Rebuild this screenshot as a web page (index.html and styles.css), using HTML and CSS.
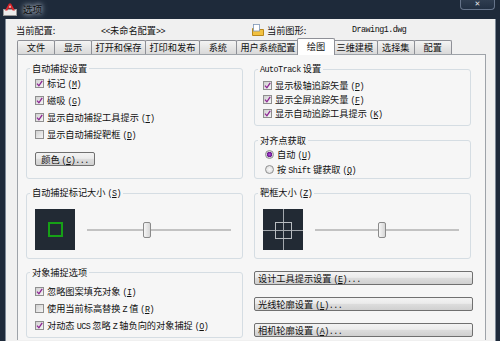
FILE: index.html
```html
<!DOCTYPE html>
<html lang="zh-CN">
<head>
    <meta charset="UTF-8">
    <meta name="viewport" content="width=device-width, initial-scale=1.0">
    <title>选项</title>
    <link rel="stylesheet" href="styles.css">
</head>
<body>
    <div class="titlebar">
        <svg class="app-icon" viewBox="0 0 14 13">
            <rect x="0.5" y="6.5" width="13" height="6" fill="#ececec" stroke="#9a9a9a"/>
            <path d="M2 7.5 L6 0.5 H8 L12 7.5 H9.6 L8.7 5.6 H5.3 L4.4 7.5Z" fill="#d8262c"/>
            <path d="M5.9 4.4 H8.1 L7 2.3Z" fill="#ececec"/>
        </svg>
        <span class="title">选项</span>
        <span class="close">✕</span>
    </div>

    <div class="client">
        <div class="profile">
            <div class="profile-half first">
                <span class="profile-label">当前配置:</span>
                <span><span class="en">&lt;&lt;</span>未命名配置<span class="en">&gt;&gt;</span></span>
            </div>
            <div class="profile-half">
                <svg class="dwg-icon" viewBox="0 0 12 12">
                    <path d="M0.5 4.5 H4.5 L5.5 5.5 H11.5 V11.5 H0.5Z" fill="#f2c140" stroke="#b8881c"/>
                    <rect x="1.5" y="0.5" width="6" height="6.5" fill="#fff" stroke="#7d96b6" stroke-width="0.8"/>
                </svg>
                <span class="profile-label">当前图形:</span>
                <span class="en">Drawing1.dwg</span>
            </div>
        </div>

        <div class="tabs">
            <div class="tab">文件</div>
            <div class="tab">显示</div>
            <div class="tab">打开和保存</div>
            <div class="tab">打印和发布</div>
            <div class="tab">系统</div>
            <div class="tab">用户系统配置</div>
            <div class="tab active">绘图</div>
            <div class="tab">三维建模</div>
            <div class="tab">选择集</div>
            <div class="tab">配置</div>
        </div>

        <div class="panel">
            <div class="grid">
                <fieldset class="group">
                    <legend>自动捕捉设置</legend>
                    <div class="opts">
                        <label class="opt"><span class="cb"><svg viewBox="0 0 7 7"><path d="M1 3.6 L2.9 5.8 L6.2 0.8"/></svg></span><span>标记<span class="key">(<u>M</u>)</span></span></label>
                        <label class="opt"><span class="cb"><svg viewBox="0 0 7 7"><path d="M1 3.6 L2.9 5.8 L6.2 0.8"/></svg></span><span>磁吸<span class="key">(<u>G</u>)</span></span></label>
                        <label class="opt"><span class="cb"><svg viewBox="0 0 7 7"><path d="M1 3.6 L2.9 5.8 L6.2 0.8"/></svg></span><span>显示自动捕捉工具提示<span class="key">(<u>T</u>)</span></span></label>
                        <label class="opt"><span class="cb"></span><span>显示自动捕捉靶框<span class="key">(<u>D</u>)</span></span></label>
                    </div>
                    <button class="btn btn-color" type="button">颜色<span class="key">(<u>C</u>)...</span></button>
                </fieldset>

                <div class="stack">
                    <fieldset class="group">
                        <legend><span class="en">AutoTrack</span> 设置</legend>
                        <div class="opts tight">
                            <label class="opt"><span class="cb"><svg viewBox="0 0 7 7"><path d="M1 3.6 L2.9 5.8 L6.2 0.8"/></svg></span><span>显示极轴追踪矢量<span class="key">(<u>P</u>)</span></span></label>
                            <label class="opt"><span class="cb"><svg viewBox="0 0 7 7"><path d="M1 3.6 L2.9 5.8 L6.2 0.8"/></svg></span><span>显示全屏追踪矢量<span class="key">(<u>F</u>)</span></span></label>
                            <label class="opt"><span class="cb"><svg viewBox="0 0 7 7"><path d="M1 3.6 L2.9 5.8 L6.2 0.8"/></svg></span><span>显示自动追踪工具提示<span class="key">(<u>K</u>)</span></span></label>
                        </div>
                    </fieldset>
                    <fieldset class="group grow">
                        <legend>对齐点获取</legend>
                        <div class="opts radios">
                            <label class="opt"><span class="rb on"></span><span>自动<span class="key">(<u>U</u>)</span></span></label>
                            <label class="opt"><span class="rb"></span><span>按 <span class="en">Shift</span> 键获取<span class="key">(<u>Q</u>)</span></span></label>
                        </div>
                    </fieldset>
                </div>

                <fieldset class="group">
                    <legend>自动捕捉标记大小<span class="key">(<u>S</u>)</span></legend>
                    <div class="size-row">
                        <div class="preview"><span class="marker"></span></div>
                        <div class="slider"><span class="thumb" style="left: 39%"></span></div>
                    </div>
                </fieldset>

                <fieldset class="group">
                    <legend>靶框大小<span class="key">(<u>Z</u>)</span></legend>
                    <div class="size-row">
                        <div class="preview">
                            <svg viewBox="0 0 40 41" width="40" height="41">
                                <path d="M0 21.5 H40 M20.5 0 V41" stroke="#a3a8ad" stroke-width="1"/>
                                <rect x="12.5" y="13.5" width="16" height="16" fill="none" stroke="#b9bdc1"/>
                            </svg>
                        </div>
                        <div class="slider"><span class="thumb" style="left: 44%"></span></div>
                    </div>
                </fieldset>

                <fieldset class="group">
                    <legend>对象捕捉选项</legend>
                    <div class="opts lower">
                        <label class="opt"><span class="cb"><svg viewBox="0 0 7 7"><path d="M1 3.6 L2.9 5.8 L6.2 0.8"/></svg></span><span>忽略图案填充对象<span class="key">(<u>I</u>)</span></span></label>
                        <label class="opt"><span class="cb"></span><span>使用当前标高替换 <span class="en">Z</span> 值<span class="key">(<u>R</u>)</span></span></label>
                        <label class="opt"><span class="cb"><svg viewBox="0 0 7 7"><path d="M1 3.6 L2.9 5.8 L6.2 0.8"/></svg></span><span>对动态 <span class="en">UCS</span> 忽略 <span class="en">Z</span> 轴负向的对象捕捉<span class="key">(<u>O</u>)</span></span></label>
                    </div>
                </fieldset>

                <div class="btn-stack">
                    <button class="btn btn-wide" type="button">设计工具提示设置<span class="key">(<u>E</u>)...</span></button>
                    <button class="btn btn-wide" type="button">光线轮廓设置<span class="key">(<u>L</u>)...</span></button>
                    <button class="btn btn-wide" type="button">相机轮廓设置<span class="key">(<u>A</u>)...</span></button>
                </div>
            </div>
        </div>
    </div>
</body>
</html>
```

FILE: styles.css
```css
body {
    margin: 0;
    height: 341px;
    overflow: hidden;
    background: #1e2a3a;
    font-family: "Noto Sans CJK SC", "Noto Sans", sans-serif;
    font-size: 9.2px;
    color: #111;
}

.en {
    font-family: "Liberation Mono", monospace;
    font-size: 8.4px;
    letter-spacing: -0.5px;
}

.key {
    font-family: "Liberation Mono", monospace;
    font-size: 8.4px;
    letter-spacing: -0.5px;
    margin-left: 2px;
}

/* title bar */
.titlebar {
    height: 19px;
    display: flex;
    align-items: flex-start;
    padding-left: 3px;
}

.app-icon {
    width: 14px;
    height: 13px;
    margin-top: 3px;
}

.title {
    margin: 3px 0 0 6px;
    line-height: 13px;
    font-size: 9.6px;
    color: #0c0c0c;
    text-shadow: 0 0 4px #c9d5e2, 0 0 7px #c9d5e2;
}

.close {
    margin-left: auto;
    margin-right: 5px;
    width: 35px;
    height: 10px;
    box-sizing: border-box;
    border: 1px solid #66748a;
    border-top: none;
    border-radius: 0 0 4px 4px;
    background: linear-gradient(#2f3d50, #223043);
    color: #e6e6e6;
    font: bold 7px "DejaVu Sans", sans-serif;
    line-height: 8px;
    text-align: center;
}

/* window body */
.client {
    height: 322px;
    overflow: hidden;
    margin: 0 4px 0 5px;
    border-left: 1px solid #7f8b98;
    border-right: 1px solid #7f8b98;
    background: #f0f0f0;
}

.profile {
    height: 19px;
    box-sizing: border-box;
    padding: 3px 0 0 10px;
    display: flex;
    align-items: center;
}

.profile-half {
    display: flex;
    align-items: center;
}

.profile-half.first {
    width: 236px;
}

.profile-label {
    width: 85px;
}

.dwg-icon {
    width: 12px;
    height: 12px;
    margin-right: 3px;
}

/* tabs */
.tabs {
    height: 16px;
    margin-left: 11px;
    display: flex;
    align-items: flex-end;
}

.tab {
    height: 14px;
    min-width: 38px;
    box-sizing: border-box;
    padding: 0 3.5px;
    margin-left: -1px;
    border: 1px solid #8e9097;
    border-bottom: none;
    border-radius: 2px 2px 0 0;
    background: linear-gradient(#f4f4f4, #e6e6e6 50%, #d9d9d9);
    line-height: 13px;
    text-align: center;
}

.tab:first-child {
    margin-left: 0;
}

.tab.active {
    height: 17px;
    margin: 0 -2px -1px -3px;
    background: #fff;
    line-height: 14px;
    position: relative;
    z-index: 1;
}

.panel {
    height: 278px;
    margin: 0 9px 0 11px;
    padding: 7px 14px 0 8px;
    border: 1px solid #9ea3a9;
    border-bottom: none;
    background: #f6f6f6;
}

.grid {
    display: grid;
    grid-template-columns: 217px 217px;
    column-gap: 11px;
    row-gap: 7px;
}

/* group boxes */
.group {
    margin: 0;
    padding: 0 11px 0 8px;
    min-width: 0;
    border: 1px solid #d5dde3;
    border-radius: 3px;
}

.group legend {
    padding: 0 2px;
    margin-left: -5px;
    line-height: 12px;
}

.stack {
    display: flex;
    flex-direction: column;
    gap: 8px;
}

.stack .grow {
    flex: 1;
}

.opts {
    display: flex;
    flex-direction: column;
    gap: 3px;
    padding: 2px 0 0;
}

.opts.tight {
    gap: 0;
    padding-bottom: 5px;
}

.opts.radios {
    gap: 1px;
    padding: 1px 0 0 2px;
}

.opts.lower {
    padding: 6px 0 5px;
}

.opt {
    height: 14px;
    display: flex;
    align-items: center;
    white-space: nowrap;
}

.cb {
    width: 9px;
    height: 9px;
    box-sizing: border-box;
    margin-right: 3px;
    border: 1px solid #8f8f8f;
    background: linear-gradient(135deg, #d0d0d0, #f5f5f5);
    display: grid;
    place-items: center;
}

.cb svg {
    width: 7px;
    height: 7px;
    fill: none;
    stroke: #8d2493;
    stroke-width: 1.3;
}

.rb {
    width: 9px;
    height: 9px;
    box-sizing: border-box;
    margin-right: 3px;
    border: 1px solid #8f8f8f;
    border-radius: 50%;
    background: radial-gradient(circle, #fafafa, #d6d6d6);
}

.rb.on {
    background: radial-gradient(circle, #b04ed8 0, #6c1690 2.3px, #d4d4d4 3px, #f4f4f4 4.5px);
}

/* buttons */
.btn {
    height: 14px;
    box-sizing: border-box;
    padding: 0;
    border: 1px solid #707070;
    border-radius: 2px;
    background: linear-gradient(#f3f3f3, #ebebeb 45%, #dddddd 50%, #d0d0d0);
    font-family: inherit;
    font-size: 9.2px;
    line-height: 12px;
    color: #111;
}

.btn-color {
    width: 60px;
    margin: 11px 0 12px;
    text-align: center;
}

.btn-stack {
    display: flex;
    flex-direction: column;
    gap: 12px;
    padding-top: 5px;
}

.btn-wide {
    width: 219px;
    padding-left: 3px;
    text-align: left;
}

/* size previews */
.size-row {
    display: flex;
    align-items: center;
    padding: 9px 0 8px;
}

.preview {
    width: 40px;
    height: 41px;
    background: #222a34;
    display: grid;
    place-items: center;
}

.marker {
    width: 15px;
    height: 15px;
    box-sizing: border-box;
    border: 2px solid #16a016;
}

.slider {
    flex: 1;
    height: 16px;
    margin-left: 12px;
    position: relative;
    background: linear-gradient(#c2c2c2, #c2c2c2) center / 100% 2px no-repeat;
}

.thumb {
    position: absolute;
    top: 0;
    width: 8px;
    height: 16px;
    box-sizing: border-box;
    border: 1px solid #8a8a8a;
    border-radius: 2px;
    background: linear-gradient(90deg, #f6f6f6, #d6d6d6);
}
```
